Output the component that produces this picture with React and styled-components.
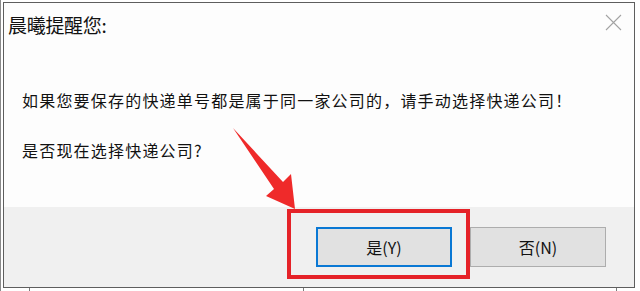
import React from "react";
import styled, { createGlobalStyle } from "styled-components";

const Global = createGlobalStyle`
  html, body {
    margin: 0;
    padding: 0;
    background: #fff;
    overflow: hidden;
  }
  body {
    font-family: "Noto Sans CJK SC", "Noto Sans", sans-serif;
    color: #111;
  }
`;

export default function App() {
  return (
    <Page>
      <Global />
      <Desk>
        <Dialog>
          <Main>
            <TitleBar>
              <Title>晨曦提醒您:</Title>
              <Close aria-label="close">
                <svg width="17" height="17" viewBox="0 0 17 17">
                  <path d="M1 1 L16 16 M16 1 L1 16" stroke="#a3a3a3" strokeWidth="1.1" fill="none" />
                </svg>
              </Close>
            </TitleBar>
            <Message>
              <Line>如果您要保存的快递单号都是属于同一家公司的，请手动选择快递公司！</Line>
              <Line>是否现在选择快递公司?</Line>
            </Message>
          </Main>
          <Footer>
            <Marked>
              <Button $primary>是(Y)</Button>
              <Highlight />
            </Marked>
            <Button>否(N)</Button>
          </Footer>
        </Dialog>
      </Desk>
      <TableEdge>
        <Cell $w={29} />
        <Cell $w={274} />
        <Cell $w={314} />
        <Cell $w={23} />
      </TableEdge>
      <Arrow viewBox="0 0 640 291" width="640" height="291">
        <polygon
          points="232,128 282,182 290,174 294,209 265,196 273,189"
          fill="#ef2a2a"
        />
      </Arrow>
    </Page>
  );
}

const Page = styled.div`
  position: relative;
  width: 640px;
  height: 291px;
  overflow: hidden;
  background: #fff;
  border-left: 1px solid #8a8a8a;
  box-sizing: border-box;
`;

const Desk = styled.div`
  padding: 2px 5px 0 2px;
`;

const Dialog = styled.div`
  display: flex;
  flex-direction: column;
  height: 286px;
  box-sizing: border-box;
  border: 1px solid #5e5e5e;
  background: #fdfdfd;
`;

const Main = styled.div`
  height: 204px;
  background: #fdfdfd;
`;

const TitleBar = styled.div`
  display: flex;
  justify-content: space-between;
  align-items: flex-start;
  padding: 10px 12px 0 4px;
`;

const Title = styled.div`
  font-size: 19px;
  line-height: 24px;
  letter-spacing: -0.3px;
  color: #111;
`;

const Close = styled.div`
  margin-top: 1px;
  width: 17px;
  height: 17px;
  line-height: 0;
`;

const Message = styled.div`
  display: flex;
  flex-direction: column;
  gap: 26px;
  padding: 0 0 0 18px;
  margin-top: 51px;
`;

const Line = styled.div`
  font-size: 16px;
  line-height: 24px;
  letter-spacing: 1.2px;
  color: #111;
  white-space: nowrap;
`;

const Footer = styled.div`
  flex: 1;
  display: flex;
  justify-content: flex-end;
  align-items: flex-start;
  gap: 18px;
  padding: 20px 28px 0 0;
  background: #f0f0f0;
`;

const Marked = styled.div`
  position: relative;
`;

const Button = styled.div`
  width: 136px;
  height: 40px;
  box-sizing: border-box;
  display: flex;
  align-items: center;
  justify-content: center;
  background: #e1e1e1;
  border: ${(p) => (p.$primary ? "2px solid #0a78d4" : "1px solid #adadad")};
  font-size: 16px;
  color: #111;
`;

const Highlight = styled.div`
  position: absolute;
  left: -29px;
  right: -18px;
  top: -18px;
  bottom: -12px;
  border: 4px solid #e52228;
  pointer-events: none;
`;

const TableEdge = styled.div`
  display: flex;
  height: 3px;
`;

const Cell = styled.div`
  width: ${(p) => p.$w}px;
  box-sizing: border-box;
  border-right: 1px solid #7a7a7a;
  &:last-child {
    border-right: none;
  }
`;

const Arrow = styled.svg`
  position: absolute;
  left: 0;
  top: 0;
  pointer-events: none;
`;
